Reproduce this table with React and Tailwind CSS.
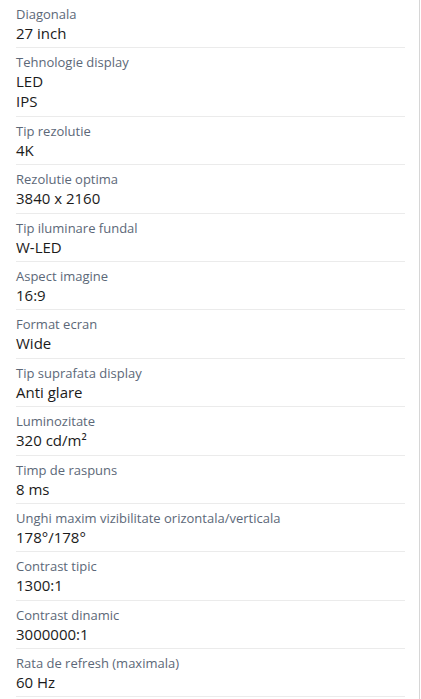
import React from "react";

const specs = [
  { label: "Diagonala", values: ["27 inch"] },
  { label: "Tehnologie display", values: ["LED", "IPS"] },
  { label: "Tip rezolutie", values: ["4K"] },
  { label: "Rezolutie optima", values: ["3840 x 2160"] },
  { label: "Tip iluminare fundal", values: ["W-LED"] },
  { label: "Aspect imagine", values: ["16:9"] },
  { label: "Format ecran", values: ["Wide"] },
  { label: "Tip suprafata display", values: ["Anti glare"] },
  { label: "Luminozitate", values: ["320 cd/m²"] },
  { label: "Timp de raspuns", values: ["8 ms"] },
  { label: "Unghi maxim vizibilitate orizontala/verticala", values: ["178°/178°"] },
  { label: "Contrast tipic", values: ["1300:1"] },
  { label: "Contrast dinamic", values: ["3000000:1"] },
  { label: "Rata de refresh (maximala)", values: ["60 Hz"] },
];

const App = () => {
  return (
    <div
      className="w-[421px] h-[699px] overflow-hidden bg-white"
      style={{ fontFamily: '"Open Sans", sans-serif' }}
    >
      <div className="w-[420px] h-full border-r border-[#d6d6d6] pl-4 pr-[14px]">
        {specs.map((spec, index) => (
          <div
            key={index}
            className="border-b border-[#ebebeb] pt-[5px] pb-[4.4px]"
          >
            <p className="text-[13px] leading-[18px] text-[#5c6878]">
              {spec.label}
            </p>
            {spec.values.map((v, i) => (
              <p
                key={i}
                className="text-[15px] leading-[20px] font-medium text-[#1b1b1b]"
              >
                {v}
              </p>
            ))}
          </div>
        ))}
      </div>
    </div>
  );
};

export default App;
